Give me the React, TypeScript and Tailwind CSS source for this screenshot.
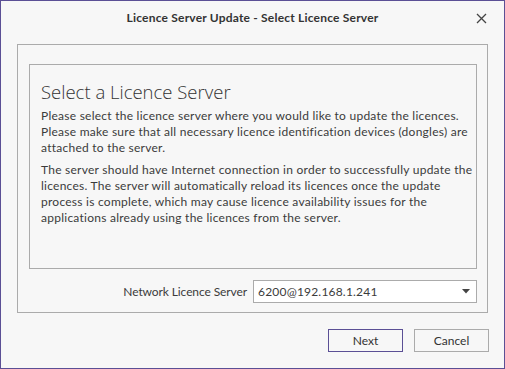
import React from "react";

export default function App() {
  const font = { fontFamily: "Lato, 'Open Sans', sans-serif" };
  return (
    <div
      className="w-[505px] h-[369px] border border-[#5b4f95] bg-[#f7f7f7] flex flex-col text-[#3b3b3b]"
      style={font}
    >
      <div className="relative h-[33px] flex items-center justify-center shrink-0">
        <span className="text-[12px] font-bold text-[#333] tracking-[0.2px]">Licence Server Update - Select Licence Server</span>
        <svg className="absolute right-[17px] top-[12px]" width="11" height="11" viewBox="0 0 11 11">
          <path d="M1 1L10 10M10 1L1 10" stroke="#444" strokeWidth="1.3" />
        </svg>
      </div>
      <div className="mx-[16px] mt-[10px] h-[269px] border border-[#ababab] flex flex-col pl-[11px] pr-[10px] pt-[19px]">
        <div className="h-[205px] border border-[#ababab] pl-[11px] pr-[10px] pt-[16px]">
          <div className="text-[18.5px] leading-[22px] font-light text-[#333] font-['Open_Sans',sans-serif]">Select a Licence Server</div>
          <p className="mt-[5px] text-[12px] leading-[16px] tracking-[0.25px] whitespace-nowrap">
            Please select the licence server where you would like to update the licences.
            <br />
            Please make sure that all necessary licence identification devices (dongles) are
            <br />
            attached to the server.
          </p>
          <p className="mt-[6px] text-[12px] leading-[16px] tracking-[0.25px] whitespace-nowrap">
            The server should have Internet connection in order to successfully update the
            <br />
            licences. The server will automatically reload its licences once the update
            <br />
            process is complete, which may cause licence availability issues for the
            <br />
            applications already using the licences from the server.
          </p>
        </div>
        <div className="mt-[11px] flex items-center justify-end gap-[6px]">
          <span className="text-[12px] tracking-[-0.1px]">Network Licence Server</span>
          <div className="w-[224px] h-[23px] border border-[#ababab] bg-white flex items-center pl-[4px] pr-[6px]">
            <span className="flex-1 text-[12px] tracking-[0.2px]">6200@192.168.1.241</span>
            <svg width="8" height="5" viewBox="0 0 8 5">
              <path d="M0 0H8L4 4.5Z" fill="#444" />
            </svg>
          </div>
        </div>
      </div>
      <div className="flex justify-end gap-[11px] mr-[15px] mt-[16px]">
        <button className="w-[75px] h-[23px] border border-[#5b4f95] bg-[#f7f7f7] text-[12px] text-[#333]">Next</button>
        <button className="w-[75px] h-[23px] border border-[#ababab] bg-[#f7f7f7] text-[12px] text-[#333]">Cancel</button>
      </div>
    </div>
  );
}
